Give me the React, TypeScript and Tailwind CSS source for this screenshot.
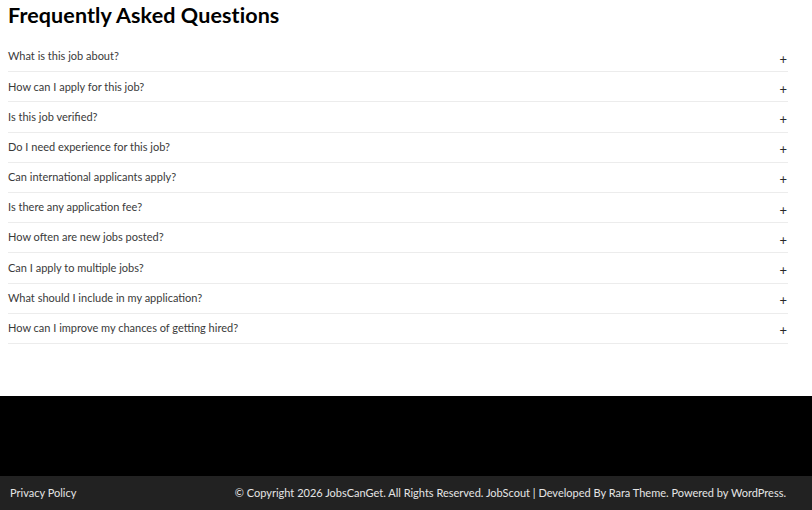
const questions = [
  "What is this job about?",
  "How can I apply for this job?",
  "Is this job verified?",
  "Do I need experience for this job?",
  "Can international applicants apply?",
  "Is there any application fee?",
  "How often are new jobs posted?",
  "Can I apply to multiple jobs?",
  "What should I include in my application?",
  "How can I improve my chances of getting hired?",
];

const FaqItem = ({ question }: { question: string }) => {
  return (
    <div className="flex items-center justify-between h-[30.2px] border-b border-[#ececec]">
      <span className="text-[11px] text-[#3a3a3a]">{question}</span>
      <span className="text-[#2a2a2a] text-[13px] leading-none pr-[1px] pt-[5px]">+</span>
    </div>
  );
};

export default function App() {
  return (
    <div className="min-h-[510px] bg-white font-['Lato','Noto_Sans',sans-serif] flex flex-col">
      <section className="px-2 pb-[52px]">
        <h1 className="text-[21.5px] font-bold text-black leading-[28px] pt-[1px] tracking-[0.1px]">
          Frequently Asked Questions
        </h1>
        <div className="mt-[13px] w-[780px]">
          {questions.map((q) => (
            <FaqItem key={q} question={q} />
          ))}
        </div>
      </section>

      <div className="h-[80px] bg-black" />

      <footer className="h-[34px] bg-[#222222] flex items-center justify-between pl-[10px] pr-[26px] text-[11px] text-[#e5e5e5]">
        <span>Privacy Policy</span>
        <span>
          © Copyright 2026 JobsCanGet. All Rights Reserved. JobScout | Developed By Rara Theme. Powered by WordPress.
        </span>
      </footer>
    </div>
  );
}
